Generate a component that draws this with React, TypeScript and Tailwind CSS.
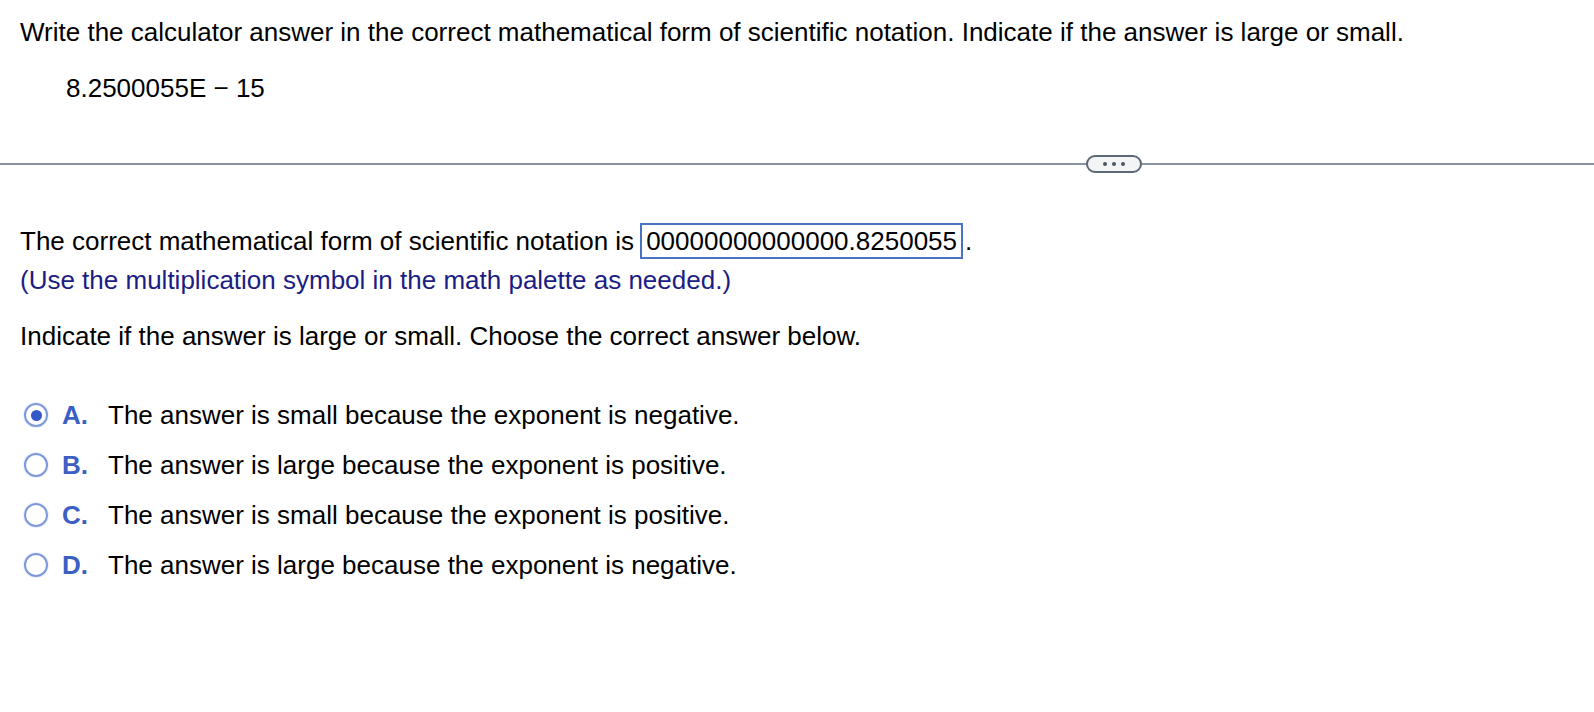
import React from 'react';

const options = [
  { letter: 'A.', text: 'The answer is small because the exponent is negative.', checked: true },
  { letter: 'B.', text: 'The answer is large because the exponent is positive.', checked: false },
  { letter: 'C.', text: 'The answer is small because the exponent is positive.', checked: false },
  { letter: 'D.', text: 'The answer is large because the exponent is negative.', checked: false },
];

function Radio({ checked }: { checked: boolean }) {
  return (
    <span className="w-[24px] h-[24px] rounded-full border-2 border-[#7d97dc] flex items-center justify-center shrink-0 shadow-[0_0_2px_#b9c8ee]">
      {checked && <span className="w-[11px] h-[11px] rounded-full bg-[#3457c6]"></span>}
    </span>
  );
}

export default function App() {
  return (
    <div className="w-[1594px] h-[712px] bg-white text-black text-[26px] leading-[30px] font-['Liberation_Sans',Arial,sans-serif]">
      <div className="pt-[17px] pl-[20px]">
        Write the calculator answer in the correct mathematical form of scientific notation. Indicate if the answer is large or small.
      </div>
      <div className="pt-[26px] pl-[66px]">8.2500055E − 15</div>

      {/* divider with expand button */}
      <div className="mt-[60px] relative h-[2px] bg-[#8a94a0]">
        <div className="absolute left-[1086px] top-[-8px] w-[56px] h-[18px] rounded-full border-2 border-[#5d6875] bg-[#f3f4f6] flex items-center justify-center gap-[5px]">
          <span className="w-[4px] h-[4px] rounded-full bg-[#4b5563]"></span>
          <span className="w-[4px] h-[4px] rounded-full bg-[#4b5563]"></span>
          <span className="w-[4px] h-[4px] rounded-full bg-[#4b5563]"></span>
        </div>
      </div>

      <div className="pt-[58px] pl-[20px] flex items-center">
        <span>The correct mathematical form of scientific notation is</span>
        <span className="ml-[6px] h-[36px] px-[4px] border-2 border-[#4a72c4] flex items-center">00000000000000.8250055</span>
        <span className="ml-[2px]">.</span>
      </div>
      <div className="pt-[6px] pl-[20px] text-[#1b1d85]">(Use the multiplication symbol in the math palette as needed.)</div>

      <div className="pt-[26px] pl-[20px]">Indicate if the answer is large or small. Choose the correct answer below.</div>

      <div className="pt-[49px] pl-[24px] flex flex-col gap-[20px]">
        {options.map((o) => (
          <div key={o.letter} className="flex items-center">
            <Radio checked={o.checked} />
            <span className="ml-[14px] w-[46px] font-bold text-[#3c5fc4]">{o.letter}</span>
            <span>{o.text}</span>
          </div>
        ))}
      </div>
    </div>
  );
}
